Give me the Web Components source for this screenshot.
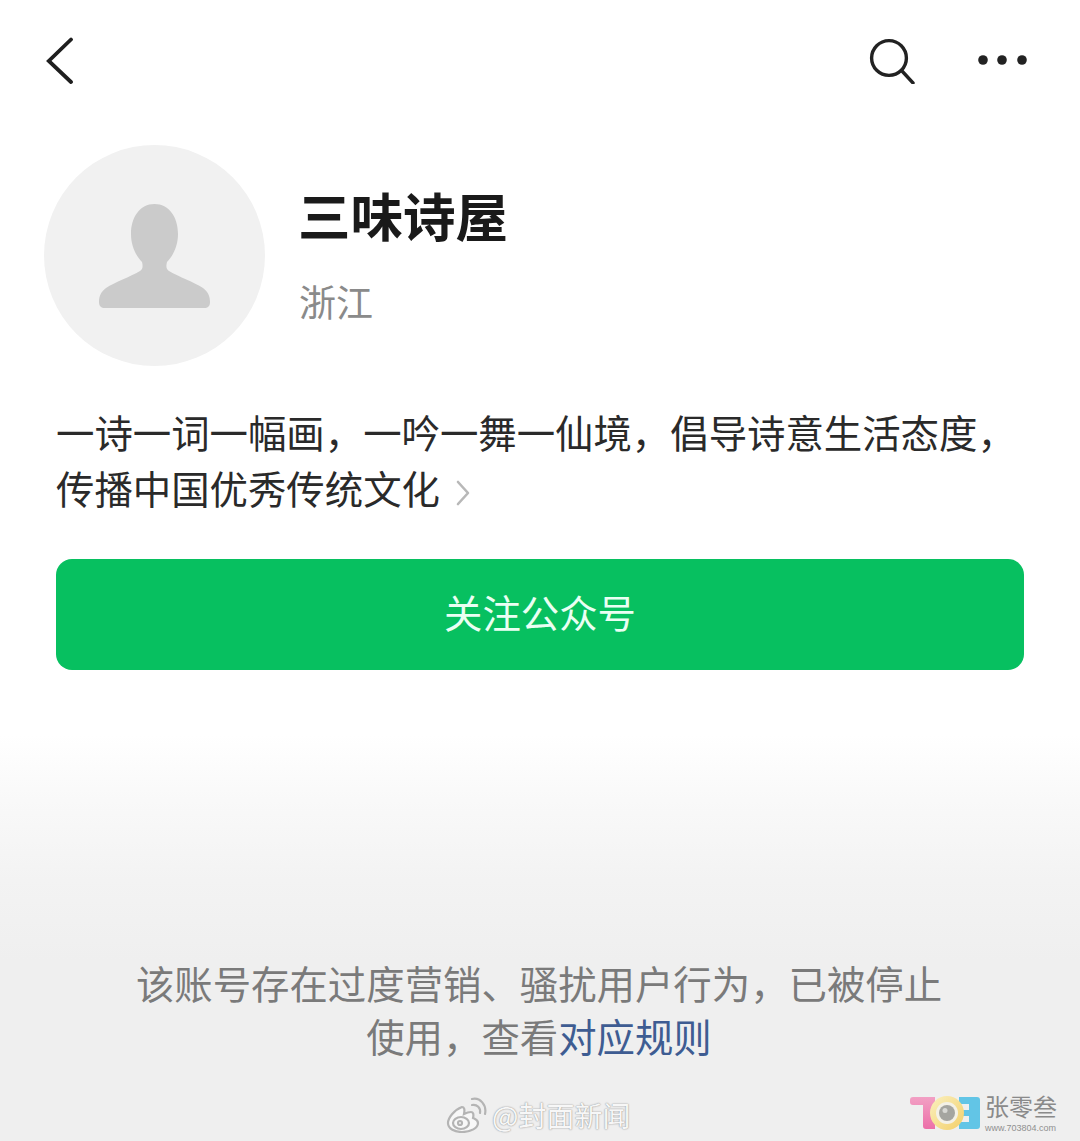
<!DOCTYPE html>
<html lang="zh">
<head>
<meta charset="utf-8">
<title>三味诗屋</title>
<style>
  html, body { margin: 0; padding: 0; background: #fff; }
  body { font-family: "Noto Sans CJK SC", "Liberation Sans", sans-serif; }
</style>
</head>
<body>
<account-page>
  <nav-bar slot="nav"></nav-bar>
  <account-header slot="header" name="三味诗屋" region="浙江"></account-header>
  <account-intro slot="intro">一诗一词一幅画，一吟一舞一仙境，倡导诗意生活态度，<br>传播中国优秀传统文化</account-intro>
  <follow-button slot="action">关注公众号</follow-button>
  <ban-notice slot="notice">该账号存在过度营销、骚扰用户行为，已被停止<br>使用，查看<a>对应规则</a></ban-notice>
  <water-marks slot="marks"></water-marks>
</account-page>

<script>
class AccountPage extends HTMLElement {
	constructor() {
		super();
		this.attachShadow({ mode: 'open' });
	}

	connectedCallback() {
		this.shadowRoot.innerHTML = `
      <style>
        :host {
          display: block;
          position: relative;
          width: 1080px;
          height: 1141px;
          overflow: hidden;
          background: linear-gradient(#fff 0, #fff 735px, #f9f9f9 800px, #f3f3f3 880px, #efefef 960px, #efefef 1141px);
        }
        .top {
          display: flex;
          flex-direction: column;
        }
      </style>
      <div class="top">
        <slot name="nav"></slot>
        <slot name="header"></slot>
        <slot name="intro"></slot>
        <slot name="action"></slot>
        <slot name="notice"></slot>
      </div>
      <slot name="marks"></slot>
    `;
	}
}

class NavBar extends HTMLElement {
	constructor() {
		super();
		this.attachShadow({ mode: 'open' });
	}

	connectedCallback() {
		this.shadowRoot.innerHTML = `
      <style>
        :host {
          display: flex;
          justify-content: space-between;
          align-items: center;
          height: 122px;
          padding: 0 52px 0 46px;
        }
        .right {
          display: flex;
          align-items: center;
          gap: 63px;
        }
        svg { display: block; }
      </style>
      <svg width="28" height="48" viewBox="0 0 28 48" fill="none" stroke="#1f1f1f" stroke-width="3.8" stroke-linecap="round" stroke-linejoin="miter">
        <path d="M25 2.5 L2.8 24 L25 45"/>
      </svg>
      <div class="right">
        <svg width="46" height="46" viewBox="0 0 46 46" fill="none" stroke="#222" stroke-width="3.4" stroke-linecap="round">
          <circle cx="20" cy="20" r="17.4"/>
          <path d="M33 33 L44 45"/>
        </svg>
        <svg width="50" height="12" viewBox="0 0 50 12" fill="#222">
          <circle cx="5" cy="5" r="4.8"/>
          <circle cx="24" cy="5" r="4.8"/>
          <circle cx="44" cy="5" r="4.8"/>
        </svg>
      </div>
    `;
	}
}

class AccountHeader extends HTMLElement {
	constructor() {
		super();
		this.attachShadow({ mode: 'open' });
	}

	connectedCallback() {
		this.shadowRoot.innerHTML = `
      <style>
        :host {
          display: flex;
          align-items: flex-start;
          gap: 33px;
          padding: 23px 0 0 44px;
          height: 245px;
        }
        .avatar {
          width: 221px;
          height: 221px;
          border-radius: 50%;
          background: #f1f1f1;
          display: flex;
          align-items: center;
          justify-content: center;
        }
        .info {
          display: flex;
          flex-direction: column;
          padding-top: 33px;
        }
        .name {
          font-size: 52.5px;
          line-height: 72px;
          font-weight: 700;
          color: #1a1a1a;
        }
        .region {
          margin-top: 26px;
          margin-left: 1px;
          font-size: 37px;
          line-height: 50px;
          color: #8a8a8a;
        }
        svg { display: block; }
      </style>
      <div class="avatar">
        <svg width="111" height="104" viewBox="0 0 111 104" fill="#cbcbcb">
          <path d="M55.5 0 C70 0 79 13 79 30 C79 42 74 52 68 58 C67 62 67 65 70 67 C80 73 95 78 104 84 C109 88 111 92 111 98 C111 102 109 104 105 104 L6 104 C2 104 0 102 0 98 C0 92 2 88 7 84 C16 78 31 73 41 67 C44 65 44 62 43 58 C37 52 32 42 32 30 C32 13 41 0 55.5 0 Z"/>
        </svg>
      </div>
      <div class="info">
        <span class="name">${this.getAttribute('name')}</span>
        <span class="region">${this.getAttribute('region')}</span>
      </div>
    `;
	}
}

class AccountIntro extends HTMLElement {
	constructor() {
		super();
		this.attachShadow({ mode: 'open' });
	}

	connectedCallback() {
		this.shadowRoot.innerHTML = `
      <style>
        :host {
          display: block;
          padding: 13px 0 0 56px;
          height: 156px;
          font-size: 38.4px;
          line-height: 56px;
          color: #2a2a2a;
          white-space: nowrap;
        }
        svg {
          display: inline-block;
          vertical-align: -2px;
          margin-left: 16px;
        }
      </style>
      <slot></slot><svg width="14" height="26" viewBox="0 0 14 26" fill="none" stroke="#b8b8b8" stroke-width="2.6" stroke-linecap="round" stroke-linejoin="round"><path d="M2 2 L12 13 L2 24"/></svg>
    `;
	}
}

class FollowButton extends HTMLElement {
	constructor() {
		super();
		this.attachShadow({ mode: 'open' });
	}

	connectedCallback() {
		this.shadowRoot.innerHTML = `
      <style>
        :host {
          display: flex;
          align-items: center;
          justify-content: center;
          box-sizing: border-box;
          width: 968px;
          height: 111px;
          margin-left: 56px;
          padding-bottom: 7px;
          border-radius: 16px;
          background: #07c060;
          color: #eafff3;
          font-size: 38.4px;
        }
      </style>
      <slot></slot>
    `;
	}
}

class BanNotice extends HTMLElement {
	constructor() {
		super();
		this.attachShadow({ mode: 'open' });
	}

	connectedCallback() {
		this.shadowRoot.innerHTML = `
      <style>
        :host {
          display: block;
          margin-top: 286px;
          padding-right: 2px;
          text-align: center;
          font-size: 38.4px;
          line-height: 53px;
          color: #7a7a7a;
          white-space: nowrap;
        }
        ::slotted(a) {
          color: #3e5c92;
        }
      </style>
      <slot></slot>
    `;
	}
}

class WaterMarks extends HTMLElement {
	constructor() {
		super();
		this.attachShadow({ mode: 'open' });
	}

	connectedCallback() {
		this.shadowRoot.innerHTML = `
      <style>
        :host {
          position: absolute;
          left: 0;
          top: 1094px;
          width: 1080px;
          height: 47px;
        }
        .weibo {
          position: absolute;
          left: 446px;
          top: 2px;
          display: flex;
          align-items: center;
          gap: 4px;
          font-size: 28px;
          line-height: 38px;
          color: #f7f7f7;
          text-shadow: 0 0 1px #8f8f8f, 0 0 2px #b0b0b0;
        }
        .logo {
          position: absolute;
          left: 909px;
          top: 2px;
          display: flex;
          gap: 4px;
        }
        .words {
          display: flex;
          flex-direction: column;
        }
        .brand {
          color: #8a8a8a;
          font-family: "Liberation Sans", "Noto Sans CJK SC", sans-serif;
          font-size: 24px;
          line-height: 24px;
          white-space: nowrap;
        }
        .url {
          color: #8f8f8f;
          font: 9px/12px "Liberation Sans", sans-serif;
          white-space: nowrap;
          margin-top: 2px;
        }
        svg { display: block; }
      </style>
      <div class="weibo">
        <svg width="42" height="36" viewBox="0 0 42 36" fill="none" stroke="#b4b4b4" stroke-width="2.2" stroke-linecap="round">
          <path fill="#f8f8f8" d="M16 10 C8 13 2 21 2 26 C2 32 9 35 16 35 C25 35 32 31 32 26 C32 23 29 22 27 21 C28 17 27 15 25 15 C22 15 20 16 18 17 C19 12 18 10 16 10 Z"/>
          <ellipse cx="15" cy="26" rx="8" ry="6"/>
          <circle cx="14" cy="26" r="2"/>
          <path d="M26 8 C31 7 35 11 34 16"/>
          <path d="M26 2 C34 0 41 8 39 17"/>
        </svg>
        <span>@封面新闻</span>
      </div>
      <div class="logo">
        <svg width="72" height="34" viewBox="0 0 72 34">
          <defs>
            <linearGradient id="pink" x1="0" y1="0" x2="0" y2="1"><stop offset="0" stop-color="#f2a0c4"/><stop offset="1" stop-color="#ec6fa8"/></linearGradient>
            <linearGradient id="ring" x1="0" y1="0" x2="1" y2="1"><stop offset="0" stop-color="#faf0c0"/><stop offset="1" stop-color="#f3cf68"/></linearGradient>
          </defs>
          <path fill="url(#pink)" d="M4 1 H26 V33 H17 C15 33 14 32 14 30 V9 H4 C2 9 1 8 1 6 V4 C1 2 2 1 4 1 Z"/>
          <path fill="#62c5e6" d="M50 1 H68 C70 1 71 2 71 4 V30 C71 32 70 33 68 33 H50 V26 H60 V20 H54 V14 H60 V8 H50 Z"/>
          <circle cx="38" cy="17" r="17" fill="url(#ring)"/>
          <circle cx="38" cy="17" r="11" fill="#f4f1e6"/>
          <circle cx="38" cy="17" r="8" fill="#a5a5a0"/>
          <circle cx="36" cy="14.5" r="2.5" fill="#d8d8d4"/>
        </svg>
        <div class="words">
          <span class="brand">张零叁</span>
          <span class="url">www.703804.com</span>
        </div>
      </div>
    `;
	}
}

customElements.define('account-page', AccountPage);
customElements.define('nav-bar', NavBar);
customElements.define('account-header', AccountHeader);
customElements.define('account-intro', AccountIntro);
customElements.define('follow-button', FollowButton);
customElements.define('ban-notice', BanNotice);
customElements.define('water-marks', WaterMarks);
</script>
</body>
</html>
